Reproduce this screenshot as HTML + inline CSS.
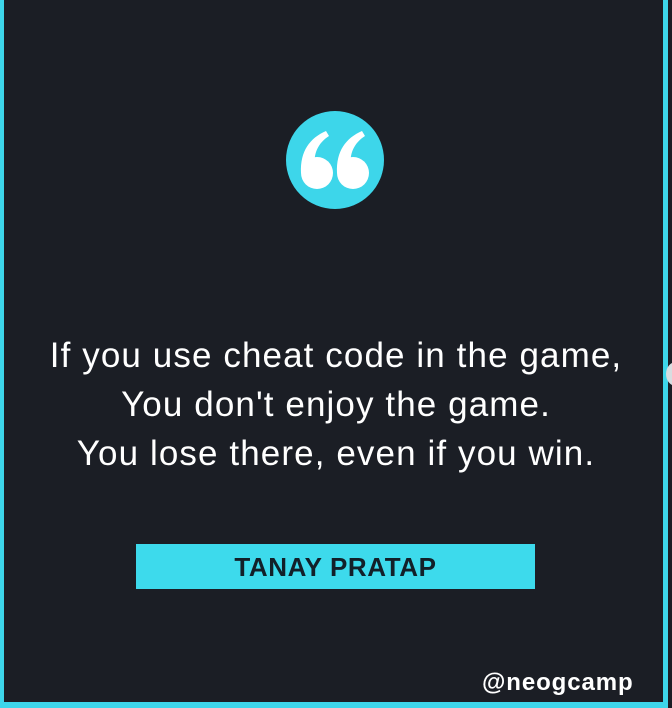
<!DOCTYPE html>
<html><head><meta charset="utf-8"><style>
html,body{margin:0;padding:0}
body{width:672px;height:708px;background:#1b1e25;position:relative;overflow:hidden;font-family:"Liberation Sans",sans-serif}
.l{position:absolute;left:0;top:0;width:4px;height:708px;background:#3dd6ea}
.r{position:absolute;left:663px;top:0;width:5px;height:708px;background:#3dd6ea}
.b{position:absolute;left:0;top:702px;width:668px;height:6px;background:#3dd6ea}
.knob{position:absolute;left:666px;top:362px;width:20px;height:24px;border-radius:50%;background:#d8dde0}
.circ{position:absolute;left:286px;top:111px;width:98px;height:98px;border-radius:50%;background:#3dd6ea}
.q{position:absolute;left:0;top:0;width:672px;text-align:center;color:#fff;font-size:35px;letter-spacing:1.1px;line-height:49px}
.box{position:absolute;left:136px;top:544px;width:399px;height:45px;background:#3ddaec;color:#122029;font-weight:bold;font-size:26px;letter-spacing:0.6px;text-align:center;line-height:46px}
.h{position:absolute;left:482px;top:669px;color:#fff;font-weight:bold;font-size:24px;letter-spacing:0.9px}
</style></head><body>
<div class="l"></div><div class="r"></div><div class="b"></div><div class="knob"></div>
<div class="circ"><svg width="98" height="98" viewBox="0 0 98 98">
<g fill="#fff">
<circle cx="31" cy="62" r="16"/><path d="M15 62 C14 40 24 27 40 20 L43 25 C32 32 27 43 29 56 Z"/>
<circle cx="67" cy="62" r="16"/><path d="M51 62 C50 40 60 27 76 20 L79 25 C68 32 63 43 65 56 Z"/>
</g></svg></div>
<div class="q" style="top:331px">If you use cheat code in the game,<br>You don't enjoy the game.<br>You lose there, even if you win.</div>
<div class="box">TANAY PRATAP</div>
<div class="h">@neogcamp</div>
</body></html>
